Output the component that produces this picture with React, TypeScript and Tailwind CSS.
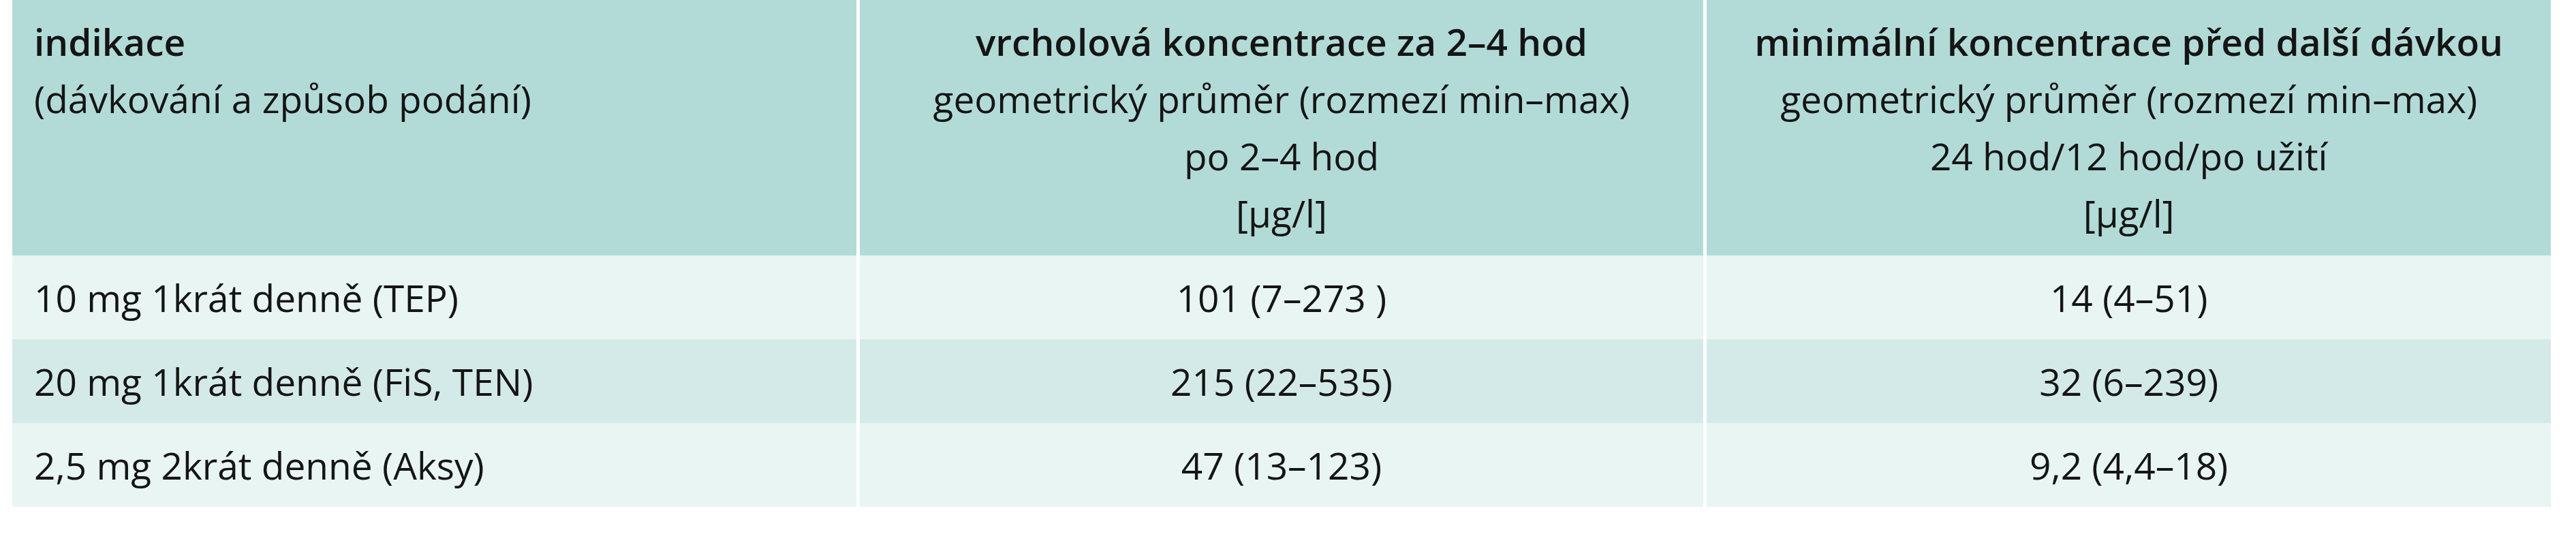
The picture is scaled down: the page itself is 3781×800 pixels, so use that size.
import { Fragment } from "react";

const rows = [
  { dose: "10 mg 1krát denně (TEP)", peak: "101 (7–273 )", trough: "14 (4–51)", bg: "bg-[#e8f5f3]" },
  { dose: "20 mg 1krát denně (FiS, TEN)", peak: "215 (22–535)", trough: "32 (6–239)", bg: "bg-[#d4eae8]" },
  { dose: "2,5 mg 2krát denně (Aksy)", peak: "47 (13–123)", trough: "9,2 (4,4–18)", bg: "bg-[#e8f5f3]" },
];

export default function App() {
  return (
    <div className="min-h-screen bg-white pl-[18px] text-[55px] leading-[84px] text-[#151515] [font-family:'Open_Sans',sans-serif]">
      <div className="grid w-[3726px] grid-cols-3 gap-x-[5px] bg-white">
        {/* Header */}
        <div className="h-[375px] bg-[#b2dbd8] pl-[32px] pt-[19px]">
          <div className="font-semibold">indikace</div>
          <div>(dávkování a způsob podání)</div>
        </div>
        <div className="h-[375px] bg-[#b2dbd8] pt-[19px] text-center">
          <div className="font-semibold">vrcholová koncentrace za 2–4 hod</div>
          <div>geometrický průměr (rozmezí min–max)</div>
          <div>po 2–4 hod</div>
          <div>[µg/l]</div>
        </div>
        <div className="h-[375px] bg-[#b2dbd8] pt-[19px] text-center">
          <div className="font-semibold">minimální koncentrace před další dávkou</div>
          <div>geometrický průměr (rozmezí min–max)</div>
          <div>24 hod/12 hod/po užití</div>
          <div>[µg/l]</div>
        </div>

        {/* Body */}
        {rows.map((r) => (
          <Fragment key={r.dose}>
            <div className={`flex h-[123px] items-center pl-[32px] ${r.bg}`}>{r.dose}</div>
            <div className={`flex h-[123px] items-center justify-center ${r.bg}`}>{r.peak}</div>
            <div className={`flex h-[123px] items-center justify-center ${r.bg}`}>{r.trough}</div>
          </Fragment>
        ))}
      </div>
    </div>
  );
}
